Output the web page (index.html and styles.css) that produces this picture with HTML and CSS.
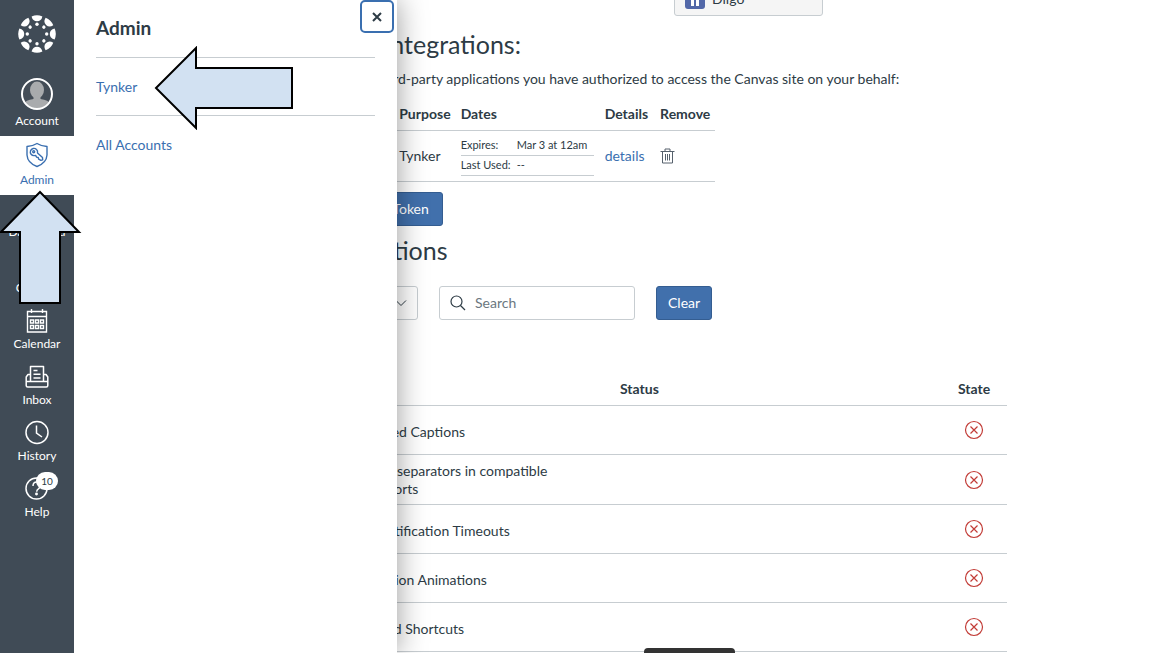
FILE: index.html
```
<!DOCTYPE html>
<html lang="en">
<head>
    <meta charset="UTF-8">
    <title>Account Settings</title>
    <link rel="stylesheet" href="styles.css">
</head>
<body>
<div class="app">
    <nav class="nav">
        <a class="logo" href="#" aria-label="Dashboard">
            <svg width="38" height="38" viewBox="0 0 38 38" fill="#fff">
                <defs>
                    <g id="petal">
                        <path d="M13.6 1.4Q19-1 24.4 1.4Q23.300 6.200 19 6.200Q14.700 6.200 13.600 1.400Z"/>
                        <circle cx="19" cy="9.300" r="1.700"/>
                    </g>
                </defs>
                <use href="#petal"/>
                <use href="#petal" transform="rotate(45 19 19)"/>
                <use href="#petal" transform="rotate(90 19 19)"/>
                <use href="#petal" transform="rotate(135 19 19)"/>
                <use href="#petal" transform="rotate(180 19 19)"/>
                <use href="#petal" transform="rotate(225 19 19)"/>
                <use href="#petal" transform="rotate(270 19 19)"/>
                <use href="#petal" transform="rotate(315 19 19)"/>
            </svg>
        </a>
        <a class="nav-item account" href="#">
            <svg width="32" height="32" viewBox="0 0 32 32">
                <defs><clipPath id="face"><circle cx="16" cy="16" r="14.500"/></clipPath></defs>
                <g clip-path="url(#face)" fill="#a9abad">
                    <rect width="32" height="32" fill="#444d57"/>
                    <ellipse cx="16" cy="12" rx="7" ry="8.500"/>
                    <path d="M12.500 17h7v4q8 1 10 5v6h-27v-6q2-4 10-5z"/>
                </g>
                <circle cx="16" cy="16" r="15" fill="none" stroke="#fff" stroke-width="2"/>
            </svg>
            <span>Account</span>
        </a>
        <a class="nav-item active" href="#">
            <svg width="26" height="26" viewBox="0 0 26 26" fill="none" stroke="#3a6fb0" stroke-width="1.400" stroke-linejoin="round">
                <path d="M13 1.500Q17.500 4.300 23 4.500V13Q22.500 21 13 24.500Q3.500 21 3 13V4.500Q8.500 4.300 13 1.500Z"/>
                <path d="M12.500 7.500a3.600 3.600 0 1 0-2.200 6.100l1.300-.2 1 1.700 1.600.4.500 1.700 2.200 1.200 1.800-.5-.2-2.300-5-4.700q.5-2-1-3.400z"/>
                <circle cx="9.700" cy="9.800" r="1"/>
            </svg>
            <span>Admin</span>
        </a>
        <a class="nav-item" href="#">
            <svg width="26" height="26" viewBox="0 0 26 26" fill="none" stroke="#fff" stroke-width="1.500">
                <path d="M4 20a9 9 0 1 1 18 0zM13 18l5-6"/>
            </svg>
            <span>Dashboard</span>
        </a>
        <a class="nav-item" href="#">
            <svg width="26" height="26" viewBox="0 0 26 26" fill="none" stroke="#fff" stroke-width="1.500">
                <path d="M5 2h16v22H5zM9 2v22M12 8h6"/>
            </svg>
            <span>Courses</span>
        </a>
        <a class="nav-item" href="#">
            <svg width="26" height="26" viewBox="0 0 26 26" fill="none" stroke="#fff" stroke-width="1.400">
                <path d="M3.500 3.500h19v20.500h-19zM3.500 8.500h19M7.500 1v4M18.500 1v4"/>
                <path d="M6.500 12h3v3h-3zM11.500 12h3v3h-3zM16.500 12h3v3h-3zM6.500 17.500h3v3h-3zM11.500 17.500h3v3h-3zM16.500 17.500h3v3h-3z"/>
            </svg>
            <span>Calendar</span>
        </a>
        <a class="nav-item" href="#">
            <svg width="26" height="26" viewBox="0 0 26 26" fill="none" stroke="#fff" stroke-width="1.500" stroke-linejoin="round">
                <path d="M6.500 17V2.500h13V17M6.500 10.500H4L2.200 13v8.500q0 1.500 1.500 1.500h18.600q1.500 0 1.500-1.500V13L22 10.500h-2.500M2.200 17.500h21.600"/>
                <path d="M9.500 6.500h4M9.500 10.200h7M9.500 14h7"/>
            </svg>
            <span>Inbox</span>
        </a>
        <a class="nav-item" href="#">
            <svg width="26" height="26" viewBox="0 0 26 26" fill="none" stroke="#fff" stroke-width="1.500">
                <circle cx="13" cy="12.500" r="11"/>
                <path d="M12.500 5.500V13l5.500 4"/>
            </svg>
            <span>History</span>
        </a>
        <a class="nav-item" href="#">
            <svg width="26" height="26" viewBox="0 0 26 26" fill="none" stroke="#fff" stroke-width="1.500">
                <circle cx="12.500" cy="12.500" r="10.500"/>
                <path d="M9 10q0-4 3.700-4t3.700 3.600q0 2-2 3.200-1.700 1-1.700 3"/>
                <circle cx="12.500" cy="18" r=".7" fill="#fff"/>
            </svg>
            <span>Help</span>
            <b class="badge">10</b>
        </a>
    </nav>

    <main class="content">
        <ul class="services">
            <li>
                <svg width="20" height="20" viewBox="0 0 20 20">
                    <rect width="20" height="20" rx="3" fill="#5268a8"/>
                    <path d="M7.500 5v12M12.500 5v12" stroke="#fff" stroke-width="3"/>
                </svg>
                <a href="#">Diigo</a>
            </li>
        </ul>
        <h2>Approved Integrations:</h2>
        <p>These are the third-party applications you have authorized to access the Canvas site on your behalf:</p>
        <table class="tokens">
            <thead>
            <tr><th>App</th><th>Purpose</th><th>Dates</th><th>Details</th><th>Remove</th></tr>
            </thead>
            <tbody>
            <tr>
                <td>User-Generated</td>
                <td>Tynker</td>
                <td>
                    <dl class="dates">
                        <div><dt>Expires:</dt><dd>Mar 3 at 12am</dd></div>
                        <div><dt>Last Used:</dt><dd>--</dd></div>
                    </dl>
                </td>
                <td><a href="#">details</a></td>
                <td>
                    <button class="trash" aria-label="Remove Tynker">
                        <svg width="15" height="16" viewBox="0 0 15 16" fill="none" stroke="#56616c">
                            <path d="M.5 3.500h14M5 3.500V1h5v2.500M2.500 3.500v11.500h10V3.500M5.500 6v6.500M7.500 6v6.500M9.500 6v6.500"/>
                        </svg>
                    </button>
                </td>
            </tr>
            </tbody>
        </table>
        <button class="btn">+ New Access Token</button>
        <h2 class="features-title">Feature Options</h2>
        <div class="filters">
            <button class="filter" aria-label="Filter features">
                <span>All</span>
                <svg width="12" height="8" viewBox="0 0 12 8" fill="none" stroke="#2d3b45"><path d="M1 1.500l5 5 5-5"/></svg>
            </button>
            <label class="search">
                <svg width="16" height="16" viewBox="0 0 16 16" fill="none" stroke="#2d3b45" stroke-width="1.200">
                    <circle cx="6.500" cy="6.500" r="5.500"/><path d="M10.500 10.500l4.500 4.500"/>
                </svg>
                <input type="text" placeholder="Search" aria-label="Search">
            </label>
            <button class="btn clear">Clear</button>
        </div>
        <table class="features">
            <thead>
            <tr><th>Feature</th><th>Status</th><th>State</th></tr>
            </thead>
            <tbody>
            <tr><td>Auto Show Closed Captions</td><td></td><td><button class="state" aria-label="Disabled"><svg viewBox="0 0 20 20"><circle cx="10" cy="10" r="8.500"/><path d="M6.500 6.500l7 7M13.500 6.500l-7 7"/></svg></button></td></tr>
            <tr class="two-line"><td>Autodetect field separators in compatible spreadsheet exports</td><td></td><td><button class="state" aria-label="Disabled"><svg viewBox="0 0 20 20"><circle cx="10" cy="10" r="8.500"/><path d="M6.500 6.500l7 7M13.500 6.500l-7 7"/></svg></button></td></tr>
            <tr><td>Disable Alert Notification Timeouts</td><td></td><td><button class="state" aria-label="Disabled"><svg viewBox="0 0 20 20"><circle cx="10" cy="10" r="8.500"/><path d="M6.500 6.500l7 7M13.500 6.500l-7 7"/></svg></button></td></tr>
            <tr><td>Disable Celebration Animations</td><td></td><td><button class="state" aria-label="Disabled"><svg viewBox="0 0 20 20"><circle cx="10" cy="10" r="8.500"/><path d="M6.500 6.500l7 7M13.500 6.500l-7 7"/></svg></button></td></tr>
            <tr><td>Disable Keyboard Shortcuts</td><td></td><td><button class="state" aria-label="Disabled"><svg viewBox="0 0 20 20"><circle cx="10" cy="10" r="8.500"/><path d="M6.500 6.500l7 7M13.500 6.500l-7 7"/></svg></button></td></tr>
            </tbody>
        </table>
    </main>

    <aside class="tray">
        <button class="close" aria-label="Close">
            <svg width="10" height="10" viewBox="0 0 10 10" stroke="#2d3b45" stroke-width="2"><path d="M1 1l8 8M9 1l-8 8"/></svg>
        </button>
        <h1>Admin</h1>
        <ul>
            <li><a href="#">Tynker</a></li>
            <li><a href="#">All Accounts</a></li>
        </ul>
    </aside>

    <svg class="arrow arrow-left" width="140" height="84" viewBox="0 0 140 84">
        <path d="M2 42L42 2V22H138V62H42V82Z"/>
    </svg>
    <svg class="arrow arrow-up" width="84" height="116" viewBox="0 0 84 116">
        <path d="M42 3L81 43H62V114H22V43H3Z"/>
    </svg>
    <div class="toast"></div>
</div>
</body>
</html>
```
FILE: styles.css
```
* {
    box-sizing: border-box;
}
body {
    margin: 0;
    height: 100vh;
    padding-bottom: 17px;
    overflow: hidden;
    background: #fff;
    color: #2d3b45;
    font: 14px/18px Lato, "Liberation Sans", sans-serif;
}
a {
    color: #3a6fb0;
    text-decoration: none;
}
button, input {
    font: inherit;
}
h1, h2, p, ul, dl, dd {
    margin: 0;
    padding: 0;
    list-style: none;
}
.app {
    display: flex;
    position: relative;
    height: 100%;
    overflow: hidden;
}

/* left navigation */
.nav {
    flex: none;
    width: 74px;
    background: #404b56;
}
.logo {
    display: flex;
    justify-content: center;
    padding: 15px 0 25px;
}
.nav-item {
    display: flex;
    position: relative;
    flex-direction: column;
    align-items: center;
    gap: 1px;
    height: 56px;
    padding-top: 1px;
    color: #fff;
    font-size: 12px;
}
.account {
    gap: 2px;
    height: 58px;
    padding-top: 0;
}
.active {
    gap: 3px;
    height: 59px;
    padding-top: 6px;
    background: #fff;
    color: #3a6fb0;
}
.badge {
    position: absolute;
    top: -3px;
    left: 36px;
    width: 22px;
    border-radius: 9px;
    background: #fff;
    color: #2d3b45;
    font-size: 10px;
    font-weight: 400;
    text-align: center;
}

/* page behind the tray */
.content {
    flex: 1;
    max-width: 933px;
    margin-top: -19px;
    padding-left: 216px;
}
.services {
    display: flex;
    justify-content: flex-end;
    padding-right: 184px;
}
.services li {
    display: flex;
    align-items: center;
    gap: 7px;
    width: 149px;
    height: 35px;
    padding: 0 10px;
    border: 1px solid #c7cdd1;
    border-radius: 3px;
    background: #f5f5f5;
}
.services a {
    color: #2d3b45;
}
h2 {
    margin: 12px 0 10px -20px;
    font-size: 25px;
    font-weight: 400;
    line-height: 32px;
}
table {
    border-collapse: collapse;
}
th {
    text-align: left;
}
.tokens {
    margin: 10px 0;
}
.tokens th, .tokens td {
    height: 32px;
    padding: 0 5px;
    border-bottom: 1px solid #c7cdd1;
}
.tokens td {
    height: 51px;
}
.tokens th:first-child, .tokens td:first-child {
    padding: 0 3px;
}
.tokens th:nth-child(4) {
    padding-right: 7px;
}
.dates {
    width: 133px;
    margin-right: 1px;
    font-size: 11px;
}
.dates div {
    display: flex;
    height: 20px;
    border-bottom: 1px solid #c7cdd1;
}
.dates dt {
    width: 56px;
}
.dates dd {
    white-space: nowrap;
}
.trash, .state {
    display: block;
    padding: 0;
    border: 0;
    background: none;
}
.trash {
    padding-top: 4px;
}
.btn {
    height: 34px;
    padding: 0 13px;
    border: 1px solid #345d91;
    border-radius: 3px;
    background: #4170ac;
    color: #fff;
}
.features-title {
    margin: 8px 0 20px -20px;
}
.filters {
    display: flex;
    gap: 21px;
}
.filter, .search {
    display: flex;
    align-items: center;
    height: 34px;
    padding: 0 10px;
    border: 1px solid #c7cdd1;
    border-radius: 3px;
    background: #fff;
}
.filter {
    justify-content: space-between;
    width: 128px;
}
.search {
    gap: 9px;
    width: 196px;
}
.search input {
    flex: 1;
    min-width: 0;
    padding: 0;
    border: 0;
    outline: 0;
    background: none;
}
.search input::placeholder {
    color: #6b7780;
}
.clear {
    padding: 0 11px;
}
.features {
    width: 100%;
    margin-top: 53px;
    table-layout: fixed;
}
.features th, .features td {
    height: 49px;
    padding: 4px 0 0;
    border-bottom: 1px solid #c7cdd1;
}
.features th {
    height: 33px;
    padding: 0;
}
.features th:first-child {
    width: 330px;
}
.features td:first-child {
    padding-left: 4px;
    padding-right: 60px;
}
.features .two-line td {
    height: 50px;
    padding-top: 1px;
}
.features th:last-child {
    width: 66px;
    text-align: center;
}
.state {
    margin: -4px auto 0;
}
.two-line .state {
    margin-top: 0;
}
.state svg {
    display: block;
    width: 20px;
    height: 20px;
    fill: none;
    stroke: #c23c37;
    stroke-width: 1.2;
}

/* admin tray */
.tray {
    position: absolute;
    top: 0;
    bottom: 0;
    left: 74px;
    width: 323px;
    padding: 16px 22px;
    background: #fff;
    box-shadow: 0 0 28px rgba(0, 0, 0, .4);
    clip-path: inset(0 -40px 0 0);
}
.tray h1 {
    padding-bottom: 17px;
    font-size: 19px;
    line-height: 24px;
}
.tray li {
    padding: 20px 0 19px;
    border-top: 1px solid #c7cdd1;
}
.close {
    position: absolute;
    top: 0;
    right: 3px;
    width: 34px;
    height: 33px;
    border: 2px solid #3a6fb0;
    border-radius: 5px;
    background: #fff;
}

/* callout arrows */
.arrow {
    position: absolute;
    fill: #d2e1f2;
    stroke: #000;
    stroke-width: 2;
}
.arrow-left {
    top: 46px;
    left: 154px;
}
.arrow-up {
    top: 189px;
    left: -2px;
}
.toast {
    position: absolute;
    bottom: 0;
    left: 644px;
    width: 91px;
    height: 5px;
    border-radius: 4px 4px 0 0;
    background: #333;
}
```
